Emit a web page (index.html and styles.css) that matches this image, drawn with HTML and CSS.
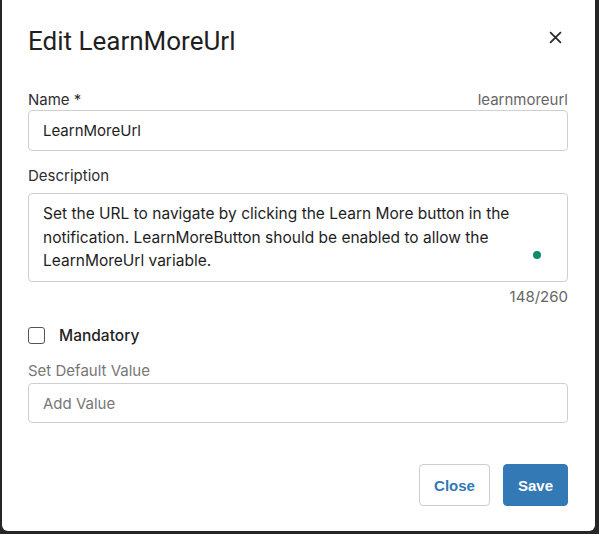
FILE: index.html
```html
<!DOCTYPE html>
<html>
<head>
<meta charset="utf-8">
<link rel="stylesheet" href="styles.css">
</head>
<body>
<div class="dialog">
  <div class="header">
    <h1 class="title">Edit LearnMoreUrl</h1>
    <button class="close-x" aria-label="Close">
      <svg width="12" height="12" viewBox="0 0 12 12"><path d="M1 1 L11 11 M11 1 L1 11" stroke="#2a2a2a" stroke-width="1.6" fill="none"/></svg>
    </button>
  </div>
  <div class="field">
    <div class="label-row">
      <span class="label">Name *</span>
      <span class="key">learnmoreurl</span>
    </div>
    <div class="input name-input">LearnMoreUrl</div>
  </div>
  <div class="field desc-field">
    <div class="label desc-label">Description</div>
    <div class="textarea">Set the URL to navigate by clicking the Learn More button in the notification. LearnMoreButton should be enabled to allow the LearnMoreUrl variable.<span class="dot"></span></div>
    <div class="counter">148/260</div>
  </div>
  <label class="check-row">
    <span class="checkbox"></span>
    <span class="check-label">Mandatory</span>
  </label>
  <div class="field default-field">
    <div class="label muted">Set Default Value</div>
    <div class="input placeholder">Add Value</div>
  </div>
  <div class="footer">
    <button class="btn btn-close">Close</button>
    <button class="btn btn-save">Save</button>
  </div>
</div>
</body>
</html>
```
FILE: styles.css
```css
html, body {
  margin: 0;
  padding: 0;
  background: #262626;
  height: 100%;
  overflow: hidden;
}
.dialog {
  margin-left: 2px;
  width: 593px;
  height: 531px;
  box-sizing: border-box;
  background: #fff;
  border-radius: 0 0 6px 6px;
  padding: 26px 27px 0 26px;
  font-family: Inter, "Noto Sans", sans-serif;
  color: #2b2b2b;
}
.header {
  display: flex;
  justify-content: space-between;
  align-items: flex-start;
  height: 30px;
}
.title {
  margin: 0;
  font-family: Roboto, sans-serif;
  font-weight: 400;
  font-size: 26px;
  line-height: 30px;
  color: #1f1f1f;
}
.close-x {
  border: 0;
  background: none;
  padding: 0;
  margin: 5px 6px 0 0;
  width: 13px;
  height: 13px;
  display: flex;
}
.close-x svg {
  width: 13px;
  height: 13px;
}
.field {
  display: flex;
  flex-direction: column;
}
.label-row {
  margin-top: 34px;
  display: flex;
  justify-content: space-between;
  align-items: baseline;
}
.label {
  font-size: 15px;
  line-height: 20px;
  color: #2e2e2e;
}
.key {
  font-size: 15px;
  line-height: 20px;
  color: #666;
}
.input {
  height: 41px;
  box-sizing: border-box;
  border: 1px solid #cfcfcf;
  border-radius: 4px;
  padding: 0 14px;
  display: flex;
  align-items: center;
  font-size: 15px;
  color: #1e1e1e;
}
.desc-label {
  margin-top: 15px;
  margin-bottom: 7px;
}
.textarea {
  position: relative;
  height: 89px;
  box-sizing: border-box;
  border: 1px solid #cfcfcf;
  border-radius: 4px;
  padding: 8px 40px 0 14px;
  font-size: 15.5px;
  line-height: 23.7px;
  color: #1e1e1e;
}
.dot {
  position: absolute;
  right: 26px;
  top: 57px;
  width: 8px;
  height: 8px;
  border-radius: 50%;
  background: #108a6c;
}
.counter {
  margin-top: 5px;
  text-align: right;
  font-size: 15px;
  line-height: 20px;
  color: #666;
}
.check-row {
  margin-top: 19px;
  display: flex;
  align-items: center;
  gap: 14px;
  height: 18px;
}
.checkbox {
  width: 17px;
  height: 17px;
  box-sizing: border-box;
  border: 1px solid #555;
  border-radius: 3px;
  flex: none;
}
.check-label {
  font-size: 15.5px;
  font-weight: 500;
  color: #1e1e1e;
}
.default-field .label {
  margin-top: 17px;
  margin-bottom: 2px;
}
.muted { color: #777 !important; }
.default-field .input {
  height: 40px;
}
.placeholder {
  color: #777 !important;
}
.footer {
  margin-top: 41px;
  display: flex;
  justify-content: flex-end;
  gap: 13px;
}
.btn {
  height: 42px;
  box-sizing: border-box;
  padding: 0 14px;
  border-radius: 4px;
  font-family: "Liberation Sans", Arial, sans-serif;
  font-weight: 700;
  font-size: 15px;
}
.btn-close {
  background: #fff;
  border: 1px solid #cdcdcd;
  color: #3379b5;
}
.btn-save {
  background: #3379b5;
  border: 1px solid #3379b5;
  color: #fff;
}
```
